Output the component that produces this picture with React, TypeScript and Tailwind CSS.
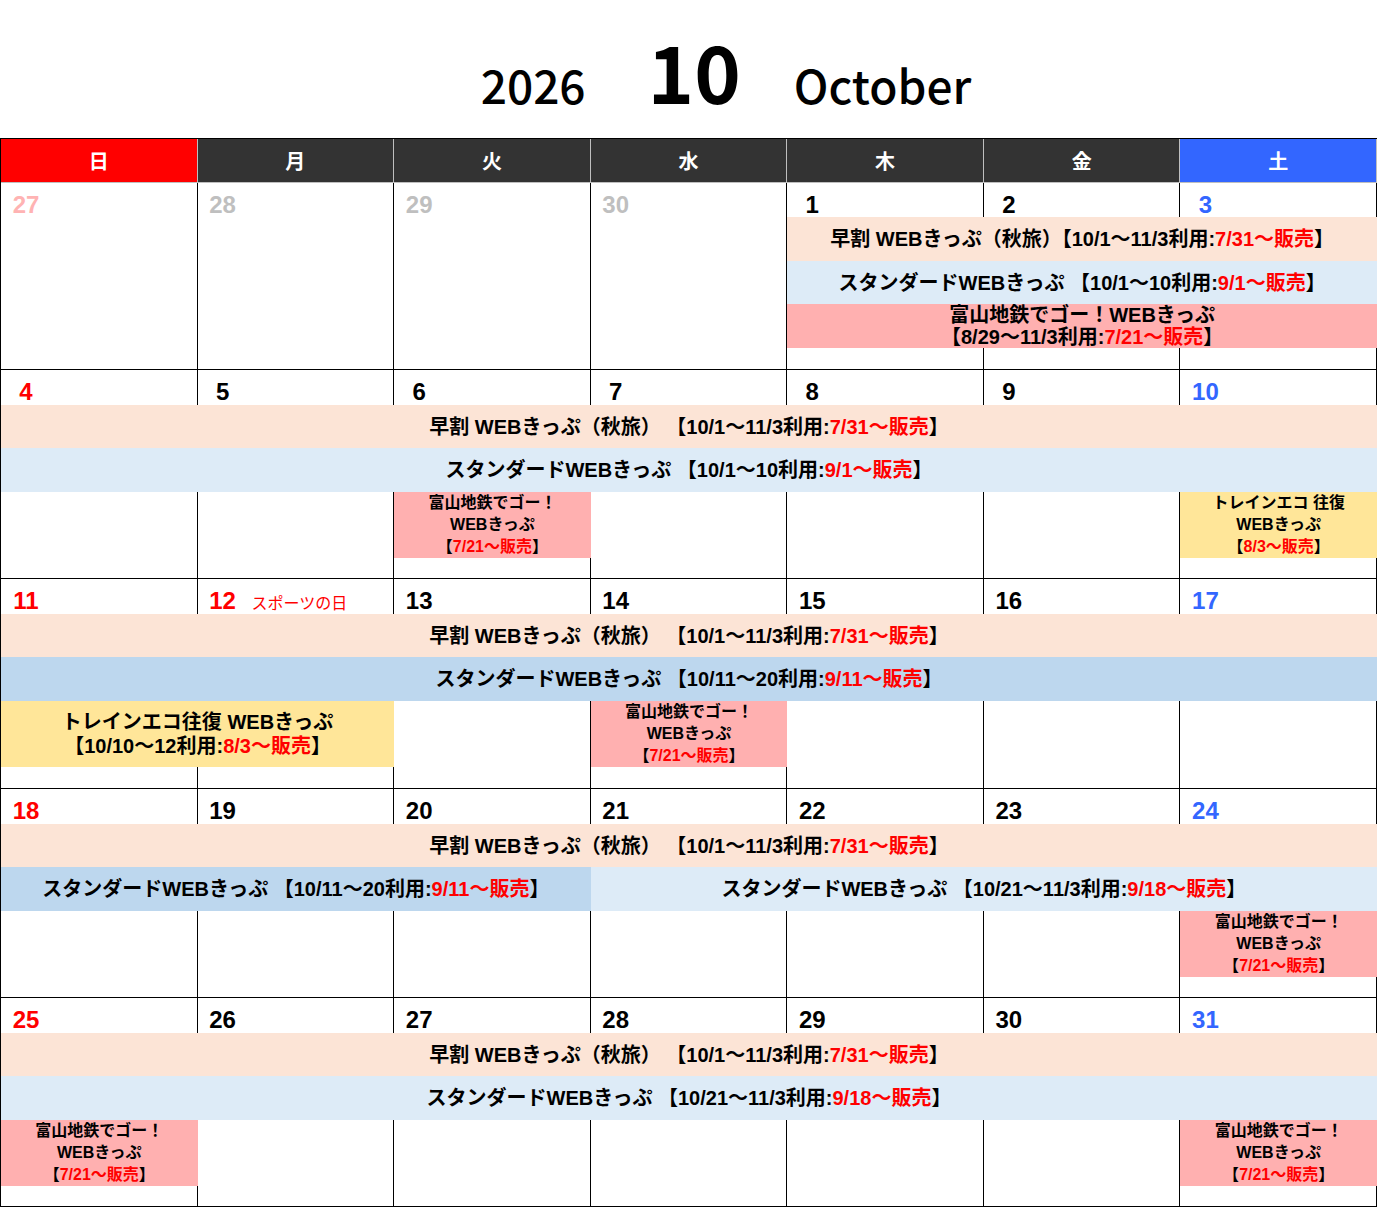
import React from "react";

// full class names so tailwind picks them up
const colStart = ["col-start-1", "col-start-2", "col-start-3", "col-start-4", "col-start-5", "col-start-6", "col-start-7"];
const colSpan = ["col-span-1", "col-span-2", "col-span-3", "col-span-4", "col-span-5", "col-span-6", "col-span-7"];
const rowStart = ["row-start-1", "row-start-2", "row-start-3", "row-start-4", "row-start-5"];

type Tone = "sun" | "sat" | "wd" | "prevSun" | "prev";

const toneClass: Record<Tone, string> = {
  sun: "text-[#ff0000]",
  sat: "text-[#3366ff]",
  wd: "text-black",
  prevSun: "text-[#ffb3b3]",
  prev: "text-[#bfbfbf]",
};

interface Day {
  n: number;
  tone: Tone;
  holiday?: string;
}

const PEACH = "bg-[#fce4d6]";
const BLUE = "bg-[#ddebf7]";
const BLUE_DARK = "bg-[#bdd7ee]";
const PINK = "bg-[#ffb0b0]";
const YELLOW = "bg-[#ffe699]";

const Red = ({ children }: { children: React.ReactNode }) => (
  <span className="text-[#ff0000]">{children}</span>
);

interface ItemProps {
  row: number;
  col: number;
  span: number;
  bg: string;
  small?: boolean;
  children: React.ReactNode;
}

// bar / block lying over the day columns
const Item = ({ row, col, span, bg, small, children }: ItemProps) => (
  <div
    className={`${rowStart[row - 1]} ${colStart[col - 1]} ${colSpan[span - 1]} ${bg} flex flex-col items-center justify-center text-center font-bold text-black whitespace-nowrap ${
      small ? "text-[16px] leading-[22px]" : "text-[20px] leading-[22px]"
    }`}
  >
    {children}
  </div>
);

const Early = ({ gap = true }: { gap?: boolean }) => (
  <span>
    早割 WEBきっぷ（秋旅）{gap ? " " : ""}【10/1～11/3利用:<Red>7/31～販売</Red>】
  </span>
);

const Chitetsu = () => (
  <>
    <span>富山地鉄でゴー！</span>
    <span>WEBきっぷ</span>
    <span>
      【<Red>7/21～販売</Red>】
    </span>
  </>
);

interface WeekProps {
  days: Day[];
  rows: string;
  children: React.ReactNode;
}

const Week = ({ days, rows, children }: WeekProps) => (
  <div className={`grid grid-cols-7 ${rows} border-b border-black`}>
    {days.map((d, i) => (
      <div key={i} className={`${colStart[i]} row-span-full border-r border-black`}>
        <div className="flex items-baseline pl-[5px] pt-[10px]">
          <span className={`w-[40px] text-center text-[24px] leading-none font-bold ${toneClass[d.tone]}`}>
            {d.n}
          </span>
          {d.holiday && (
            <span className="ml-[9px] text-[16px] leading-none text-[#ff0000]">{d.holiday}</span>
          )}
        </div>
      </div>
    ))}
    {children}
  </div>
);

const week = (nums: number[]): Day[] =>
  nums.map((n, i) => ({ n, tone: i === 0 ? "sun" : i === 6 ? "sat" : "wd" }));

const headers = [
  { label: "日", bg: "bg-[#ff0000]" },
  { label: "月", bg: "bg-[#333333]" },
  { label: "火", bg: "bg-[#333333]" },
  { label: "水", bg: "bg-[#333333]" },
  { label: "木", bg: "bg-[#333333]" },
  { label: "金", bg: "bg-[#333333]" },
  { label: "土", bg: "bg-[#3366ff]" },
];

const ROWS = "grid-rows-[35px_43px_44px_66px_20px]";

export default function App() {
  const w1: Day[] = [
    { n: 27, tone: "prevSun" },
    { n: 28, tone: "prev" },
    { n: 29, tone: "prev" },
    { n: 30, tone: "prev" },
    { n: 1, tone: "wd" },
    { n: 2, tone: "wd" },
    { n: 3, tone: "sat" },
  ];
  const w3 = week([11, 12, 13, 14, 15, 16, 17]);
  w3[1] = { n: 12, tone: "sun", holiday: "スポーツの日" };

  return (
    <div className="w-[1378px] bg-white font-['Liberation_Sans','Noto_Sans_CJK_JP',sans-serif] text-black">
      {/* Title */}
      <div className="h-[138px] flex justify-center items-baseline pl-[74px] pt-[30px] leading-none font-['Noto_Sans_CJK_JP',sans-serif]">
        <span className="text-[46px] font-medium">2026</span>
        <span className="ml-[62px] text-[79px] font-bold">10</span>
        <span className="ml-[53px] text-[46px] font-medium">October</span>
      </div>

      <div className="w-[1377px] border-l border-black">
        {/* Weekday header */}
        <div className="grid grid-cols-7 h-[45px] border-t border-black border-b border-b-[#bfbfbf]">
          {headers.map((h) => (
            <div
              key={h.label}
              className={`${h.bg} flex items-center justify-center pt-[2px] border-r border-[#bfbfbf] text-white text-[20px] font-bold`}
            >
              {h.label}
            </div>
          ))}
        </div>

        {/* Week 1 */}
        <Week days={w1} rows="grid-rows-[34px_44px_43px_44px_21px]">
          <Item row={2} col={5} span={3} bg={PEACH}>
            <Early gap={false} />
          </Item>
          <Item row={3} col={5} span={3} bg={BLUE}>
            <span>
              スタンダードWEBきっぷ 【10/1～10利用:<Red>9/1～販売</Red>】
            </span>
          </Item>
          <Item row={4} col={5} span={3} bg={PINK}>
            <span>富山地鉄でゴー！WEBきっぷ</span>
            <span>
              【8/29～11/3利用:<Red>7/21～販売</Red>】
            </span>
          </Item>
        </Week>

        {/* Week 2 */}
        <Week days={week([4, 5, 6, 7, 8, 9, 10])} rows={ROWS}>
          <Item row={2} col={1} span={7} bg={PEACH}>
            <Early />
          </Item>
          <Item row={3} col={1} span={7} bg={BLUE}>
            <span>
              スタンダードWEBきっぷ 【10/1～10利用:<Red>9/1～販売</Red>】
            </span>
          </Item>
          <Item row={4} col={3} span={1} bg={PINK} small>
            <Chitetsu />
          </Item>
          <Item row={4} col={7} span={1} bg={YELLOW} small>
            <span>トレインエコ 往復</span>
            <span>WEBきっぷ</span>
            <span>
              【<Red>8/3～販売</Red>】
            </span>
          </Item>
        </Week>

        {/* Week 3 */}
        <Week days={w3} rows="grid-rows-[35px_43px_44px_66px_21px]">
          <Item row={2} col={1} span={7} bg={PEACH}>
            <Early />
          </Item>
          <Item row={3} col={1} span={7} bg={BLUE_DARK}>
            <span>
              スタンダードWEBきっぷ 【10/11～20利用:<Red>9/11～販売</Red>】
            </span>
          </Item>
          <Item row={4} col={1} span={2} bg={YELLOW}>
            <span className="leading-[24px]">トレインエコ往復 WEBきっぷ</span>
            <span className="leading-[24px]">
              【10/10～12利用:<Red>8/3～販売</Red>】
            </span>
          </Item>
          <Item row={4} col={4} span={1} bg={PINK} small>
            <Chitetsu />
          </Item>
        </Week>

        {/* Week 4 */}
        <Week days={week([18, 19, 20, 21, 22, 23, 24])} rows={ROWS}>
          <Item row={2} col={1} span={7} bg={PEACH}>
            <Early />
          </Item>
          <Item row={3} col={1} span={3} bg={BLUE_DARK}>
            <span>
              スタンダードWEBきっぷ 【10/11～20利用:<Red>9/11～販売</Red>】
            </span>
          </Item>
          <Item row={3} col={4} span={4} bg={BLUE}>
            <span>
              スタンダードWEBきっぷ 【10/21～11/3利用:<Red>9/18～販売</Red>】
            </span>
          </Item>
          <Item row={4} col={7} span={1} bg={PINK} small>
            <Chitetsu />
          </Item>
        </Week>

        {/* Week 5 */}
        <Week days={week([25, 26, 27, 28, 29, 30, 31])} rows={ROWS}>
          <Item row={2} col={1} span={7} bg={PEACH}>
            <Early />
          </Item>
          <Item row={3} col={1} span={7} bg={BLUE}>
            <span>
              スタンダードWEBきっぷ 【10/21～11/3利用:<Red>9/18～販売</Red>】
            </span>
          </Item>
          <Item row={4} col={1} span={1} bg={PINK} small>
            <Chitetsu />
          </Item>
          <Item row={4} col={7} span={1} bg={PINK} small>
            <Chitetsu />
          </Item>
        </Week>
      </div>
    </div>
  );
}
